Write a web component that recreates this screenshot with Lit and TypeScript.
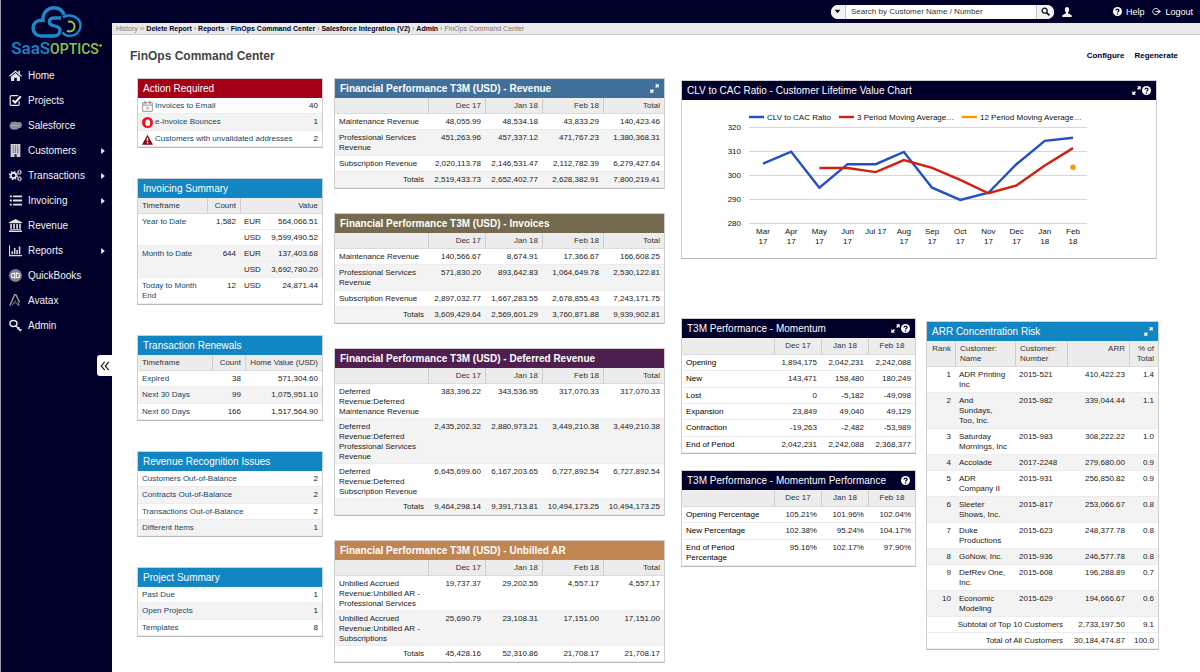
import { LitElement, html, svg, css, nothing, type TemplateResult } from "lit";
import { customElement, property } from "lit/decorators.js";
import { classMap } from "lit/directives/class-map.js";

/* ---------- icons ---------- */

const expandIcon = svg`<path d="M9 .5h6.500V7l-2.200-2.200-2.300 2.300-2-2 2.300-2.300zM.5 9v6.500H7l-2.200-2.200 2.300-2.300-2-2-2.300 2.300z" fill="currentColor"/>`;
const helpIcon = (mark: string) => svg`
  <circle cx="8" cy="8" r="8" fill="currentColor"/>
  <path d="M5.300 6.200C5.400 4.400 6.600 3.600 8 3.600s2.700.8 2.700 2.400c0 1.800-2.600 1.900-2.600 3.800" fill="none" stroke=${mark} stroke-width="2.200"/>
  <circle cx="8.100" cy="12.300" r="1.400" fill=${mark}/>`;

const icons: Record<string, TemplateResult> = {
  home: svg`<path d="M8 1.500 0 8.400l1 1.200L8 3.700l7 5.900 1-1.200-2.500-2.200V2.300h-2v2.200z" fill="#e2e2e2"/><path d="M2.500 9.500 8 4.900l5.500 4.600v5.200H9.600v-4H6.400v4H2.500z" fill="#e2e2e2"/>`,
  check: svg`<path d="M12.500 9v3.500a1.500 1.500 0 0 1-1.500 1.500H3a1.500 1.500 0 0 1-1.500-1.500v-9A1.500 1.500 0 0 1 3 2h8" fill="none" stroke="#e2e2e2" stroke-width="1.500"/><path d="m4.500 7.500 3 3L14.500 3" fill="none" stroke="#fff" stroke-width="2.400"/>`,
  cloud: svg`<path d="M4 12.500a3.500 3.500 0 0 1-2.600-5.600A3.200 3.200 0 0 1 6 3.800a3.200 3.200 0 0 1 4.300.3A3.800 3.800 0 0 1 16 7.500a3.800 3.800 0 0 1-4.300 3.900 3 3 0 0 1-3.600 1.200 3 3 0 0 1-4.100-.1z" fill="#8b8b90"/><path d="M3 8h10" stroke="#b9b9bd" stroke-width="1.500" stroke-dasharray="1.500 1"/>`,
  building: svg`<path d="M2 0h12v16H2z" fill="#d0d0d4"/><path d="M4.500 2.500h7M4.500 5h7M4.500 7.500h7M4.500 10h7" stroke="#4b4b68" stroke-width="1.400" stroke-dasharray="1.400 1.400"/><path d="M6.500 12.500h3V16h-3z" fill="#33334f"/>`,
  gears: svg`<circle cx="5.500" cy="8" r="3.200" fill="none" stroke="#e8e8e8" stroke-width="2"/><circle cx="5.500" cy="8" r="4.900" fill="none" stroke="#e8e8e8" stroke-width="1.500" stroke-dasharray="2 1.850"/><circle cx="13" cy="4" r="1.700" fill="none" stroke="#e8e8e8" stroke-width="1.200"/><circle cx="13" cy="4" r="2.700" fill="none" stroke="#e8e8e8" stroke-dasharray="1.200 .9"/><circle cx="13" cy="12" r="1.700" fill="none" stroke="#e8e8e8" stroke-width="1.200"/><circle cx="13" cy="12" r="2.700" fill="none" stroke="#e8e8e8" stroke-dasharray="1.200 .9"/>`,
  list: svg`<path d="M1 3h2.500M1 8h2.500M1 13h2.500M5 3h11M5 8h11M5 13h11" stroke="#e2e2e2" stroke-width="2.200"/>`,
  bank: svg`<path d="M8 0 0 4v1.200h16V4zM1.500 6h2v6h-2zM5.200 6h2v6h-2zM8.900 6h2v6h-2zM12.500 6h2v6h-2zM1 12.600h14v1H1zM0 14.300h16V16H0z" fill="#e2e2e2"/>`,
  chart: svg`<path d="M.7 1.500v12.800H16" fill="none" stroke="#d8d8d8" stroke-width="1.300"/><path d="M4 12.500V9M7 12.500V5M10 12.500V7.500M13 12.500V3" stroke="#d8d8d8" stroke-width="1.900"/>`,
  quickbooks: svg`<circle cx="8" cy="8" r="8" fill="#808082"/><path d="M7 12V5.400H5.400a2.600 2.600 0 0 0 0 5.200H7M9 4v6.600h1.600a2.600 2.600 0 0 0 0-5.200H9" fill="none" stroke="#f4f4f4" stroke-width="1.300"/>`,
  avatax: svg`<path d="M1 14.500 7 1h1.500l4.500 9" fill="none" stroke="#9a9a9e" stroke-width="1.700"/><path d="m4 13.500 4.500-5M8 11l5 3.500M11 9l1.500 5.500" fill="none" stroke="#77777c" stroke-width="1.300"/>`,
  key: svg`<ellipse cx="5.500" cy="5.500" rx="4.300" ry="3.700" fill="none" stroke="#e2e2e2" stroke-width="1.900"/><path d="m8 8 6.500 6.500M10.500 13l2.500-2.500M13 15l2.500-2.500" fill="none" stroke="#e2e2e2" stroke-width="1.700"/>`,
  calendar: svg`<path d="M1 2.500h14V15H1zM1 6h14" fill="#fff" stroke="#888" stroke-width="1.300"/><path d="M4.500 0v4M11.500 0v4" stroke="#888" stroke-width="1.800"/><path d="m6 8.500 4 4M10 8.500l-4 4" stroke="#888" stroke-width="1.200"/>`,
  stop: svg`<circle cx="8" cy="8" r="8" fill="#f0101c"/><path d="M4.400 7.500h1V4.800h1.300V3.600H8v-.4h1.300V4h1.300v1.500h1.200V10c0 2-1.500 3-3.600 3s-3.800-2-3.800-5.500z" fill="#fff"/>`,
  warning: svg`<path d="M8 1 0 15.500h16z" fill="#8e0510"/><path d="M8 5.500v5M8 11.800v2" stroke="#fff" stroke-width="2"/>`,
  user: svg`<path d="M8 0c2.200 0 3.500 1.700 3.500 4 0 1.900-.8 3.700-1.900 4.700v1.200L15.500 13v3H.5v-3l5.900-3.100V8.700C5.300 7.700 4.500 5.900 4.500 4 4.500 1.700 5.800 0 8 0z" fill="#f2f2f2"/>`,
  logout: svg`<path d="M11 4.500A5.500 5.500 0 1 0 11 11.500" fill="none" stroke="#e2e2e2" stroke-width="1.700"/><path d="M6 7h5V4l5 4-5 4V9H6z" fill="#e2e2e2"/>`,
  search: svg`<circle cx="6.500" cy="6.500" r="4.500" fill="none" stroke="#111" stroke-width="2.400"/><path d="m9.500 9.500 5.500 5.500" stroke="#111" stroke-width="3"/>`,
  collapse: svg`<path d="M7.500 1.500 2 8l5.500 6.500M14 1.500 8.500 8l5.500 6.500" fill="none" stroke="#222" stroke-width="2"/>`,
  caret: svg`<path d="M3 5h10l-5 6z" fill="#111"/>`,
  arrow: svg`<path d="M3 0v16l10-8z" fill="#e8e8e8"/>`,
  expand: expandIcon,
  help: helpIcon("#00002a"),
};

const icon = (name: string, cls = "icon") =>
  html`<svg class=${cls} viewBox="0 0 16 16" aria-hidden="true">${icons[name]}</svg>`;

/* ---------- data ---------- */

interface Cell {
  t: string;
  link?: boolean;
  icon?: string;
  left?: boolean;
  right?: boolean;
  span?: number;
  rows?: number;
}
type Item = string | Cell;

interface Report {
  title: string;
  tone: string;
  strong?: boolean;
  variant?: string;
  actions?: string[];
  weights: number[];
  head?: Item[];
  rows: Item[][];
}

const link = (t: string, ic?: string): Cell => ({ t, link: true, icon: ic });
const totals: Cell = { t: "Totals", right: true };
const months = ["", "Dec 17", "Jan 18", "Feb 18"];
const fin = (title: string, tone: string, rows: Item[][], extra: Partial<Report> = {}): Report => ({
  title: `Financial Performance T3M (USD) - ${title}`,
  tone,
  strong: true,
  weights: [93, 57, 57, 61, 61],
  head: [...months, "Total"],
  rows,
  ...extra,
});

const summaries: Report[] = [
  {
    title: "Action Required", tone: "red", variant: "dense striped", weights: [164, 20],
    rows: [
      [link("Invoices to Email", "calendar"), "40"],
      [link("e-Invoice Bounces", "stop"), "1"],
      [link("Customers with unvalidated addresses", "warning"), "2"],
    ],
  },
  {
    title: "Invoicing Summary", tone: "blue", variant: "grouped", weights: [69, 33, 22, 60],
    head: ["Timeframe", "Count", { t: "Value", span: 2 }],
    rows: [
      [{ t: "Year to Date", link: true, rows: 2 }, { t: "1,582", rows: 2 }, { t: "EUR", left: true }, "564,066.51"],
      [{ t: "USD", left: true }, "9,599,490.52"],
      [{ t: "Month to Date", link: true, rows: 2 }, { t: "644", rows: 2 }, { t: "EUR", left: true }, "137,403.68"],
      [{ t: "USD", left: true }, "3,692,780.20"],
      [link("Today to Month End"), "12", { t: "USD", left: true }, "24,871.44"],
    ],
  },
  {
    title: "Transaction Renewals", tone: "blue", variant: "dense striped", weights: [74, 33, 77],
    head: ["Timeframe", "Count", "Home Value (USD)"],
    rows: [
      [link("Expired"), "38", "571,304.60"],
      [link("Next 30 Days"), "99", "1,075,951.10"],
      [link("Next 60 Days"), "166", "1,517,564.90"],
    ],
  },
  {
    title: "Revenue Recognition Issues", tone: "blue", variant: "dense striped", weights: [164, 20],
    rows: [
      [link("Customers Out-of-Balance"), "2"],
      [link("Contracts Out-of-Balance"), "2"],
      [link("Transactions Out-of-Balance"), "2"],
      [link("Different Items"), "1"],
    ],
  },
  {
    title: "Project Summary", tone: "blue", variant: "dense striped", weights: [164, 20],
    rows: [[link("Past Due"), "1"], [link("Open Projects"), "1"], [link("Templates"), "8"]],
  },
];

const financials: Report[] = [
  fin("Revenue", "steel", [
    ["Maintenance Revenue", "48,055.99", "48,534.18", "43,833.29", "140,423.46"],
    ["Professional Services Revenue", "451,263.96", "457,337.12", "471,767.23", "1,380,368.31"],
    ["Subscription Revenue", "2,020,113.78", "2,146,531.47", "2,112,782.39", "6,279,427.64"],
    [totals, "2,519,433.73", "2,652,402.77", "2,628,382.91", "7,800,219.41"],
  ], { actions: ["expand"], variant: "striped" }),
  fin("Invoices", "olive", [
    ["Maintenance Revenue", "140,566.67", "8,674.91", "17,366.67", "166,608.25"],
    ["Professional Services Revenue", "571,830.20", "893,642.83", "1,064,649.78", "2,530,122.81"],
    ["Subscription Revenue", "2,897,032.77", "1,667,283.55", "2,678,855.43", "7,243,171.75"],
    [totals, "3,609,429.64", "2,569,601.29", "3,760,871.88", "9,939,902.81"],
  ], { variant: "striped" }),
  fin("Deferred Revenue", "plum", [
    ["Deferred Revenue:Deferred Maintenance Revenue", "383,396.22", "343,536.95", "317,070.33", "317,070.33"],
    ["Deferred Revenue:Deferred Professional Services Revenue", "2,435,202.32", "2,880,973.21", "3,449,210.38", "3,449,210.38"],
    ["Deferred Revenue:Deferred Subscription Revenue", "6,645,699.60", "6,167,203.65", "6,727,892.54", "6,727,892.54"],
    [totals, "9,464,298.14", "9,391,713.81", "10,494,173.25", "10,494,173.25"],
  ], { variant: "striped tall" }),
  fin("Unbilled AR", "copper", [
    ["Unbilled Accrued Revenue:Unbilled AR - Professional Services", "19,737.37", "29,202.55", "4,557.17", "4,557.17"],
    ["Unbilled Accrued Revenue:Unbilled AR - Subscriptions", "25,690.79", "23,108.31", "17,151.00", "17,151.00"],
    [totals, "45,428.16", "52,310.86", "21,708.17", "21,708.17"],
  ], { variant: "striped tall" }),
];

const momentum: Report[] = [
  {
    title: "T3M Performance - Momentum", tone: "navy", variant: "dense ink", actions: ["expand", "help"],
    weights: [92, 47, 47, 47], head: months,
    rows: [
      ["Opening", "1,894,175", "2,042,231", "2,242,088"],
      ["New", "143,471", "158,480", "180,249"],
      ["Lost", "0", "-5,182", "-49,098"],
      ["Expansion", "23,849", "49,040", "49,129"],
      ["Contraction", "-19,263", "-2,482", "-53,989"],
      ["End of Period", "2,042,231", "2,242,088", "2,368,377"],
    ],
  },
  {
    title: "T3M Performance - Momentum Performance", tone: "navy", variant: "dense ink", actions: ["help"],
    weights: [92, 47, 47, 47], head: months,
    rows: [
      ["Opening Percentage", "105.21%", "101.96%", "102.04%"],
      ["New Percentage", "102.38%", "95.24%", "104.17%"],
      ["End of Period\nPercentage", "95.16%", "102.17%", "97.90%"],
    ],
  },
];

const customer = (rank: string, name: string, num: string, arr: string, pct: string): Item[] => [
  { t: rank, right: true }, { t: name, left: true }, { t: num, left: true }, arr, pct,
];

const concentration: Report = {
  title: "ARR Concentration Risk", tone: "blue", variant: "striped ranked", actions: ["expand"],
  weights: [28, 60, 52, 62, 29],
  head: [{ t: "Rank", right: true }, { t: "Customer:\nName", left: true }, { t: "Customer:\nNumber", left: true }, "ARR", "% of\nTotal"],
  rows: [
    customer("1", "ADR Printing\nInc", "2015-521", "410,422.23", "1.4"),
    customer("2", "And\nSundays,\nToo, Inc.", "2015-982", "339,044.44", "1.1"),
    customer("3", "Saturday\nMornings, Inc", "2015-983", "308,222.22", "1.0"),
    customer("4", "Accolade", "2017-2248", "279,680.00", "0.9"),
    customer("5", "ADR\nCompany II", "2015-931", "256,850.82", "0.9"),
    customer("6", "Sleeter\nShows, Inc.", "2015-817", "253,066.67", "0.8"),
    customer("7", "Duke\nProductions", "2015-623", "248,377.78", "0.8"),
    customer("8", "GoNow, Inc.", "2015-936", "246,577.78", "0.8"),
    customer("9", "DefRev One,\nInc.", "2015-608", "196,288.89", "0.7"),
    customer("10", "Economic\nModeling", "2015-629", "194,666.67", "0.6"),
    [{ t: "Subtotal of Top 10 Customers", span: 3, right: true }, "2,733,197.50", "9.1"],
    [{ t: "Total of All Customers", span: 3, right: true }, "30,184,474.87", "100.0"],
  ],
};

/* ---------- panel: coloured title bar over any body ---------- */

@customElement("report-panel")
export class ReportPanel extends LitElement {
  @property() heading = "";
  @property() tone = "blue";
  @property({ type: Boolean }) strong = false;
  @property({ attribute: false }) actions: string[] = [];

  static styles = css`
    :host { display: block; background: #fff; border: 1px solid #cfcfcf; border-bottom-color: #b9b9b9; }
    .bar { display: flex; align-items: center; justify-content: space-between; color: #fff; padding: 0 5px; height: 19px; }
    .title { margin: 0; font-size: 10px; line-height: 19px; font-weight: 400; white-space: nowrap; }
    .strong .title { font-weight: 700; }
    .actions { display: flex; gap: 1px; }
    .action { display: flex; border: 0; padding: 0; background: none; color: #fff; cursor: pointer; }
    .glyph { width: 9px; height: 9px; }
    .red { background: #a50016; }
    .blue { background: #1186c3; }
    .steel { background: #40709a; }
    .olive { background: #766a4e; }
    .plum { background: #4f204f; }
    .copper { background: #c08652; }
    .navy { background: #00002a; }
  `;

  render() {
    return html`
      <div class=${classMap({ bar: true, [this.tone]: true, strong: this.strong })}>
        <h2 class="title">${this.heading}</h2>
        <div class="actions">
          ${this.actions.map((a) => html`<button class="action" type="button" aria-label=${a}>${icon(a, "glyph")}</button>`)}
        </div>
      </div>
      <slot></slot>
    `;
  }
}

/* ---------- report table ---------- */

@customElement("report-table")
export class ReportTable extends LitElement {
  @property({ attribute: false }) report!: Report;

  static styles = css`
    :host { display: block; }
    .table { width: 100%; table-layout: fixed; border-collapse: separate; border-spacing: 0; font-size: 8px; line-height: 10px; color: #222; }
    .th, .td { vertical-align: top; text-align: right; padding: 3px 4px 2px; border-bottom: 1px solid #ececec; font-weight: 400; white-space: pre-line; }
    .th { background: #ececec; border-bottom-color: #dcdcdc; color: #333; }
    .th + .th { border-left: 1px solid #cfcfcf; }
    .td:first-child, .th:first-child { text-align: left; padding-right: 2px; }
    .td.left, .th.left { text-align: left; }
    .td.right:first-child, .th.right:first-child { text-align: right; padding-right: 4px; }
    .striped .row:nth-child(even) .td { background: #f3f3f3; }
    .grouped .row:nth-child(3) .td, .grouped .row:nth-child(4) .td { background: #f3f3f3; }
    .dense .row:nth-child(3n + 2) .td { padding-bottom: 3px; }
    .tall .td { padding-bottom: 1px; }
    .tall .row:last-child .td { padding-bottom: 2px; }
    .ink .th { padding-bottom: 3px; text-align: center; }
    .ink .td:first-child { color: #000; }
    .ranked .row:nth-child(n + 11) .td { background: #fff; }
    .ranked .td:first-child, .ranked .th:first-child { padding-left: 1px; }
    .link { color: #124868; text-decoration: none; }
    .with-icon { display: flex; align-items: center; gap: 2px; height: 10px; white-space: nowrap; }
    .icon { width: 11px; height: 11px; flex: none; }
  `;

  private cell(item: Item, head: boolean) {
    const c: Cell = typeof item === "string" ? { t: item } : item;
    const cls = classMap({ [head ? "th" : "td"]: true, left: !!c.left, right: !!c.right });
    if (head) return html`<th class=${cls} scope="col" colspan=${c.span ?? 1}>${c.t}</th>`;
    const body = c.link
      ? html`<a class=${c.icon ? "link with-icon" : "link"} href="#">${c.icon ? icon(c.icon) : nothing}${c.t}</a>`
      : c.t;
    return html`<td class=${cls} colspan=${c.span ?? 1} rowspan=${c.rows ?? 1}>${body}</td>`;
  }

  render() {
    const r = this.report;
    const sum = r.weights.reduce((a, b) => a + b, 0);
    return html`
      <table class="table ${r.variant ?? ""}" aria-label=${r.title}>
        <colgroup>${r.weights.map((w) => html`<col style="width:${(w / sum) * 100}%" />`)}</colgroup>
        ${r.head ? html`<thead><tr>${r.head.map((h) => this.cell(h, true))}</tr></thead>` : nothing}
        <tbody>${r.rows.map((row) => html`<tr class="row">${row.map((c) => this.cell(c, false))}</tr>`)}</tbody>
      </table>
    `;
  }
}

/* ---------- line chart ---------- */

const labels = ["Mar 17", "Apr 17", "May 17", "Jun 17", "Jul 17", "Aug 17", "Sep 17", "Oct 17", "Nov 17", "Dec 17", "Jan 18", "Feb 18"];
const ratio = [304.7, 309.7, 294.7, 304.5, 304.5, 309.6, 294.7, 289.6, 292.6, 304.6, 314.2, 315.5];
const average3 = [302.9, 302.9, 301.2, 306.2, 303, 298, 292.4, 295.7, 304, 311.2];
const average12 = 303.2;

@customElement("ratio-chart")
export class RatioChart extends LitElement {
  static styles = css`
    :host { display: block; }
    .chart { display: block; width: 100%; font-size: 8px; fill: #111; }
    .grid { stroke: #d6d6d6; stroke-width: 1; }
    .line { fill: none; stroke-width: 2.4; }
    .blue { stroke: #2350c4; }
    .red { stroke: #d1200c; }
    .orange { stroke: #ff9500; }
    .dot { fill: #ff9500; }
    .end { text-anchor: end; }
    .mid { text-anchor: middle; }
  `;

  private x = (i: number) => 81 + (i * 310) / 11;
  private y = (v: number) => 27 + (320 - v) * 2.4;
  private points = (vals: number[], from = 0) => vals.map((v, i) => `${this.x(i + from)},${this.y(v)}`).join(" ");

  render() {
    const legend = [
      { x: 67, color: "blue", text: "CLV to CAC Ratio" },
      { x: 157, color: "red", text: "3 Period Moving Average…" },
      { x: 280, color: "orange", text: "12 Period Moving Average…" },
    ];
    return html`
      <svg class="chart" viewBox="0 0 474 158" role="img" aria-label="CLV to CAC Ratio by month">
        ${legend.map((l) => svg`
          <path class="line ${l.color}" d="M${l.x} 17h15" />
          <text x=${l.x + 18} y="20">${l.text}</text>`)}
        ${[320, 310, 300, 290, 280].map((v) => svg`
          <path class="grid" d="M67 ${Math.round(this.y(v)) + 0.5}H405" />
          <text class="end" x="59" y=${this.y(v) + 3}>${v}</text>`)}
        ${labels.map((l, i) => {
          const [m, yr] = l.split(" ");
          return m === "Jul"
            ? svg`<text class="mid" x=${this.x(i)} y="134">${l}</text>`
            : svg`<text class="mid" x=${this.x(i)} y="134">${m}</text><text class="mid" x=${this.x(i)} y="144">${yr}</text>`;
        })}
        <polyline class="line blue" points=${this.points(ratio)} />
        <polyline class="line red" points=${this.points(average3, 2)} />
        <circle class="dot" cx=${this.x(11)} cy=${this.y(average12)} r="2.700" />
      </svg>
    `;
  }
}

/* ---------- page ---------- */

const nav = [
  { t: "Home", i: "home" },
  { t: "Projects", i: "check" },
  { t: "Salesforce", i: "cloud" },
  { t: "Customers", i: "building", more: true },
  { t: "Transactions", i: "gears", more: true },
  { t: "Invoicing", i: "list", more: true },
  { t: "Revenue", i: "bank" },
  { t: "Reports", i: "chart", more: true },
  { t: "QuickBooks", i: "quickbooks" },
  { t: "Avatax", i: "avatax" },
  { t: "Admin", i: "key" },
];

const crumbs = ["Delete Report", "Reports", "FinOps Command Center", "Salesforce Integration (V2)", "Admin"];

@customElement("app-root")
export class AppRoot extends LitElement {
  static styles = css`
    :host { display: flex; min-height: 100vh; background: #fff; font-family: "Liberation Sans", Arial, sans-serif; font-size: 8px; line-height: 10px; color: #333; }
    .sidebar { flex: none; width: 111px; display: flex; flex-direction: column; background: #00002a; border-left: 1px solid #9a9aa8; }
    .brand { display: flex; flex-direction: column; align-items: center; padding-top: 5px; text-decoration: none; height: 58px; }
    .cloud { width: 52px; height: 34px; }
    .wordmark { display: flex; align-items: baseline; font-family: Roboto, sans-serif; font-size: 14px; line-height: 18px; font-weight: 500; color: #8dc63f; }
    .saas { font-size: 17px; color: #1c86c8; }
    .mark { width: 3px; height: 3px; align-self: flex-start; margin-top: 5px; }
    .nav { list-style: none; margin: 0; padding: 0; }
    .nav-link { display: flex; align-items: center; gap: 6px; height: 25px; padding: 0 6px 0 8px; color: #f2f2f5; font-size: 10px; text-decoration: none; }
    .nav-icon { width: 13px; height: 13px; flex: none; }
    .nav-text { flex: 1; }
    .nav-arrow { width: 6px; height: 6px; }
    .collapse { align-self: flex-end; margin-top: 17px; width: 15px; height: 21px; display: flex; align-items: center; justify-content: center; padding: 0; border: 0; border-radius: 3px 0 0 3px; background: #fff; }
    .collapse-icon { width: 10px; height: 10px; }

    .page { flex: 1; min-width: 0; display: flex; flex-direction: column; }
    .topbar { display: flex; align-items: center; justify-content: flex-end; height: 23px; padding-right: 7px; background: #00002a; }
    .search { display: flex; width: 223px; height: 14px; border-radius: 7px; overflow: hidden; background: #fff; margin-right: 8px; }
    .search-part { display: flex; align-items: center; justify-content: center; flex: none; border: 0; padding: 0; background: #f2f2f2; }
    .scope { width: 15px; border-right: 1px solid #c4c4c4; }
    .go { width: 18px; border-left: 1px solid #c4c4c4; }
    .field { flex: 1; min-width: 0; border: 0; padding: 0 5px; font: inherit; color: #333; outline: 0; }
    .field::placeholder { color: #333; opacity: 1; }
    .small { width: 9px; height: 9px; }
    .person { width: 10px; height: 10px; }
    .user { display: flex; margin-right: 33px; }
    .top-link { display: flex; align-items: center; gap: 4px; color: #fff; font-size: 9px; text-decoration: none; margin-left: 8px; }
    .top-icon { width: 9px; height: 9px; color: #fff; }
    .crumbs { height: 11px; padding: 0 4px; background: #e9e9e9; border-bottom: 1px solid #cdcdcd; font-size: 7px; line-height: 12px; color: #777; white-space: nowrap; }
    .crumb { color: #00002a; font-weight: 700; text-decoration: none; }

    .heading { display: flex; align-items: center; justify-content: space-between; padding: 11px 22px 0 18px; height: 20px; }
    .title { margin: 0; font-size: 12px; line-height: 20px; color: #444; }
    .tools { display: flex; gap: 10px; }
    .tool { color: #00002a; font-weight: 700; text-decoration: none; }

    .board { display: grid; grid-template-columns: 186fr 331fr 483fr; gap: 11px; align-items: start; padding: 12px 41px 4px 25px; }
    .column { display: grid; min-width: 0; gap: 30px; }
    .finance { gap: 24px; }
    .insight { display: grid; gap: 59px; padding: 2px 0 0 5px; min-width: 0; }
    .wide { margin-right: 2px; }
    .split { display: grid; grid-template-columns: 235fr 233fr; gap: 10px; align-items: start; }
    .pair { gap: 16px; }
    .lowered { padding-top: 3px; }
  `;

  private panel = (r: Report) => html`
    <report-panel .heading=${r.title} .tone=${r.tone} .strong=${!!r.strong} .actions=${r.actions ?? []}>
      <report-table .report=${r}></report-table>
    </report-panel>`;

  render() {
    return html`
      <aside class="sidebar">
        <a class="brand" href="#" aria-label="SaaSOptics">
          <svg class="cloud" viewBox="0 0 52 34" aria-hidden="true">
            <path d="M22 31H10.500C5.500 31 2 27.500 2 23s3.400-7.800 8-7.800h2C11.500 8 16.500 2.700 23 2.700c5.200 0 8.600 2.900 10.200 7.300" fill="none" stroke="#1c86c8" stroke-width="3.400"/>
            <path d="M32 12.300c2.200-1.600 4.700-2 7-1.800 6.600.5 11.300 5.600 10.500 11.200-.7 5.300-5 9.300-10.500 9.300-3.500 0-6-1.500-7.500-3.500" fill="none" stroke="#1c86c8" stroke-width="2.400"/>
            <path d="M30 13h-6.700c-3.500 0-5 1.700-5 3.900 0 5.800 10.700 2.300 10.700 8.400 0 3.500-2.500 5.700-6 5.700h-5" fill="none" stroke="#1c86c8" stroke-width="3.400"/>
            <path d="M37 16.700a5 5 0 1 1-1 9" fill="none" stroke="#8dc63f" stroke-width="2"/>
          </svg>
          <span class="wordmark"><span class="saas">SaaS</span>OPTICS<svg class="mark" viewBox="0 0 4 4" aria-hidden="true"><circle cx="2" cy="2" r="1.800" fill="#8dc63f"/></svg></span>
        </a>
        <nav>
          <ul class="nav">
            ${nav.map((n) => html`<li><a class="nav-link" href="#">
              ${icon(n.i, "nav-icon")}<span class="nav-text">${n.t}</span>${n.more ? icon("arrow", "nav-arrow") : nothing}
            </a></li>`)}
          </ul>
        </nav>
        <button class="collapse" type="button" aria-label="Collapse menu">${icon("collapse", "collapse-icon")}</button>
      </aside>

      <div class="page">
        <header class="topbar">
          <form class="search" role="search">
            <button class="search-part scope" type="button" aria-label="Search scope">${icon("caret", "small")}</button>
            <input class="field" type="text" aria-label="Search by Customer Name / Number" placeholder="Search by Customer Name / Number" />
            <button class="search-part go" type="button" aria-label="Search">${icon("search", "small")}</button>
          </form>
          <a class="user" href="#" aria-label="Account">${icon("user", "person")}</a>
          <a class="top-link" href="#">${icon("help", "top-icon")}Help</a>
          <a class="top-link" href="#">${icon("logout", "top-icon")}Logout</a>
        </header>
        <nav class="crumbs" aria-label="History">
          History ›› ${crumbs.map((c) => html`<a class="crumb" href="#">${c}</a> › `)}FinOps Command Center
        </nav>
        <main>
          <div class="heading">
            <h1 class="title">FinOps Command Center</h1>
            <div class="tools"><a class="tool" href="#">Configure</a><a class="tool" href="#">Regenerate</a></div>
          </div>
          <div class="board">
            <section class="column">${summaries.map(this.panel)}</section>
            <section class="column finance">${financials.map(this.panel)}</section>
            <section class="insight">
              <report-panel class="wide" heading="CLV to CAC Ratio - Customer Lifetime Value Chart" tone="navy" .actions=${["expand", "help"]}>
                <ratio-chart></ratio-chart>
              </report-panel>
              <div class="split">
                <div class="column pair">${momentum.map(this.panel)}</div>
                <div class="lowered">${this.panel(concentration)}</div>
              </div>
            </section>
          </div>
        </main>
      </div>
    `;
  }
}
